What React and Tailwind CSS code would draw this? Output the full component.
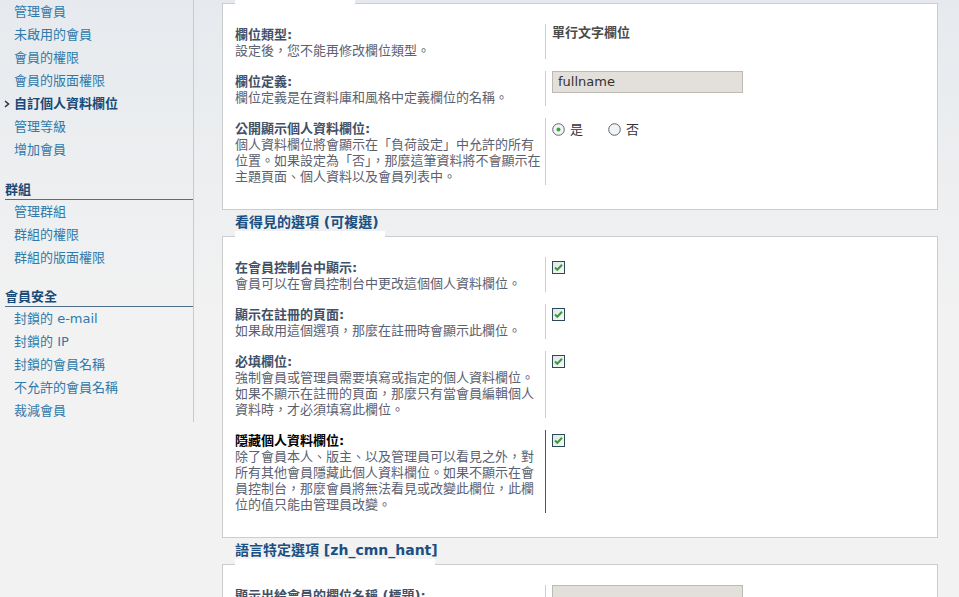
import React from 'react';

const FONT = '"DejaVu Sans", "Noto Sans CJK TC", sans-serif';

const menu = [
    {
        items: ['管理會員', '未啟用的會員', '會員的權限', '會員的版面權限', '自訂個人資料欄位', '管理等級', '增加會員'],
        active: '自訂個人資料欄位',
    },
    { title: '群組', items: ['管理群組', '群組的權限', '群組的版面權限'] },
    { title: '會員安全', items: ['封鎖的 e-mail', '封鎖的 IP', '封鎖的會員名稱', '不允許的會員名稱', '裁減會員'] },
];

const Checkbox = () => (
    <svg width="13" height="13" viewBox="0 0 13 13">
        <defs>
            <linearGradient id="cb" x1="0" y1="0" x2="1" y2="1">
                <stop offset="0" stopColor="#dfe6e3" />
                <stop offset="1" stopColor="#f8faf8" />
            </linearGradient>
        </defs>
        <rect x="0.5" y="0.5" width="12" height="12" fill="url(#cb)" stroke="#2c4a58" />
        <path d="M3 6.5 L5.3 8.8 L10 3.8" fill="none" stroke="#3b9a3b" strokeWidth="2" />
    </svg>
);

const Radio = ({ checked }) => (
    <svg width="13" height="13" viewBox="0 0 13 13">
        <circle cx="6.5" cy="6.5" r="5.8" fill="#f1f3f4" stroke="#5a6672" />
        {checked && <circle cx="6.5" cy="6.5" r="2" fill="#3aa53a" />}
    </svg>
);

const Input = ({ value }) => (
    <div className="w-[191px] h-[22px] bg-[#e3dfda] border border-[#bdb9b3] pl-[5px] flex items-center text-[13px] text-[#333]" style={{ fontFamily: '"DejaVu Sans", sans-serif' }}>
        {value}
    </div>
);

// legend above each panel, with the white strip that cuts the panel border
const Legend = ({ title, gap }) => (
    <div className="pl-[13px]">
        {title && (
            <div className="pt-[3px] h-[21px] leading-[18px] text-[14px] font-bold text-[#1b4f82] whitespace-nowrap">{title}</div>
        )}
        <div className="h-[5px] bg-white" style={{ width: gap }} />
    </div>
);

const Row = ({ label, desc, strong, children }) => (
    <div className="flex">
        <div className="w-[310px] pt-[3px] leading-[16px] text-[13px]">
            <div className={`font-bold ${strong ? 'text-black' : 'text-[#425067]'}`}>{label}</div>
            {desc && <div className="text-[#5b6170]">{desc}</div>}
        </div>
        <div className={`flex-1 border-l pl-[6px] ${strong ? 'border-[#555]' : 'border-[#ccc]'}`}>{children}</div>
    </div>
);

const Panel = ({ gap, children }) => (
    <div className="bg-white border-l border-r border-b border-[#ccc]">
        <div className="flex">
            <div className="w-[12px] border-t border-[#ccc]" />
            <div style={{ width: gap }} />
            <div className="flex-1 border-t border-[#ccc]" />
        </div>
        <div className="pl-[12px] pt-[20px] pb-[24px] flex flex-col gap-[12px]">{children}</div>
    </div>
);

const App = () => {
    return (
        <div
            className="w-[959px] h-[597px] overflow-hidden flex items-start bg-[linear-gradient(to_bottom,#e6eaee_0px,#f2f2f2_320px)]"
            style={{ fontFamily: FONT }}
        >
            {/* left admin menu */}
            <div className="w-[194px] shrink-0 border-r border-[#c8cacc]">
                {menu.map((block, i) => (
                    <div key={i}>
                        {block.title && (
                            <div className={`${i === 1 ? 'mt-[20px]' : 'mt-[19px]'} ml-[5px] h-[19px] leading-[18px] border-b border-[#4f6e8a] text-[13px] font-bold text-[#1a4a78]`}>
                                {block.title}
                            </div>
                        )}
                        {block.items.map((item) => (
                            <div key={item} className="h-[23px] flex items-center text-[13px] whitespace-nowrap">
                                <span className="w-[14px] flex justify-center">
                                    {item === block.active && (
                                        <svg width="6" height="8" viewBox="0 0 6 8">
                                            <path d="M1 1 L4.5 4 L1 7" fill="none" stroke="#2a3a48" strokeWidth="1.6" />
                                        </svg>
                                    )}
                                </span>
                                <span className={item === block.active ? 'font-bold text-[#174a78]' : 'text-[#2f7aaa]'}>{item}</span>
                            </div>
                        ))}
                    </div>
                ))}
            </div>

            {/* settings panels */}
            <div className="w-[716px] shrink-0 ml-[28px]">
                <div className="h-[3px] ml-[13px] w-[120px] bg-white" />
                <Panel gap="120px">
                    <Row label="欄位類型:" desc="設定後，您不能再修改欄位類型。">
                        <div className="text-[13px] font-bold text-[#4a4a4a] leading-[16px] pt-[1px]">單行文字欄位</div>
                    </Row>
                    <Row label="欄位定義:" desc="欄位定義是在資料庫和風格中定義欄位的名稱。">
                        <Input value="fullname" />
                    </Row>
                    <Row label="公開顯示個人資料欄位:" desc="個人資料欄位將會顯示在「負荷設定」中允許的所有位置。如果設定為「否」，那麼這筆資料將不會顯示在主題頁面、個人資料以及會員列表中。">
                        <div className="flex items-center text-[13px] text-[#333] pt-[2px]">
                            <Radio checked />
                            <span className="ml-[5px]">是</span>
                            <span className="ml-[25px]"><Radio /></span>
                            <span className="ml-[5px]">否</span>
                        </div>
                    </Row>
                </Panel>

                <Legend title="看得見的選項 (可複選)" gap="150px" />
                <Panel gap="150px">
                    <Row label="在會員控制台中顯示:" desc="會員可以在會員控制台中更改這個個人資料欄位。">
                        <div className="pt-[4px]"><Checkbox /></div>
                    </Row>
                    <Row label="顯示在註冊的頁面:" desc="如果啟用這個選項，那麼在註冊時會顯示此欄位。">
                        <div className="pt-[4px]"><Checkbox /></div>
                    </Row>
                    <Row label="必填欄位:" desc="強制會員或管理員需要填寫或指定的個人資料欄位。如果不顯示在註冊的頁面，那麼只有當會員編輯個人資料時，才必須填寫此欄位。">
                        <div className="pt-[4px]"><Checkbox /></div>
                    </Row>
                    <Row strong label="隱藏個人資料欄位:" desc="除了會員本人、版主、以及管理員可以看見之外，對所有其他會員隱藏此個人資料欄位。如果不顯示在會員控制台，那麼會員將無法看見或改變此欄位，此欄位的值只能由管理員改變。">
                        <div className="pt-[4px]"><Checkbox /></div>
                    </Row>
                </Panel>

                <Legend title="語言特定選項 [zh_cmn_hant]" gap="200px" />
                <Panel gap="200px">
                    <Row label="顯示出給會員的欄位名稱 (標題):" desc="這是顯示給會員看見的欄位名稱。">
                        <Input value="" />
                    </Row>
                </Panel>
            </div>
        </div>
    );
};

export default App;
